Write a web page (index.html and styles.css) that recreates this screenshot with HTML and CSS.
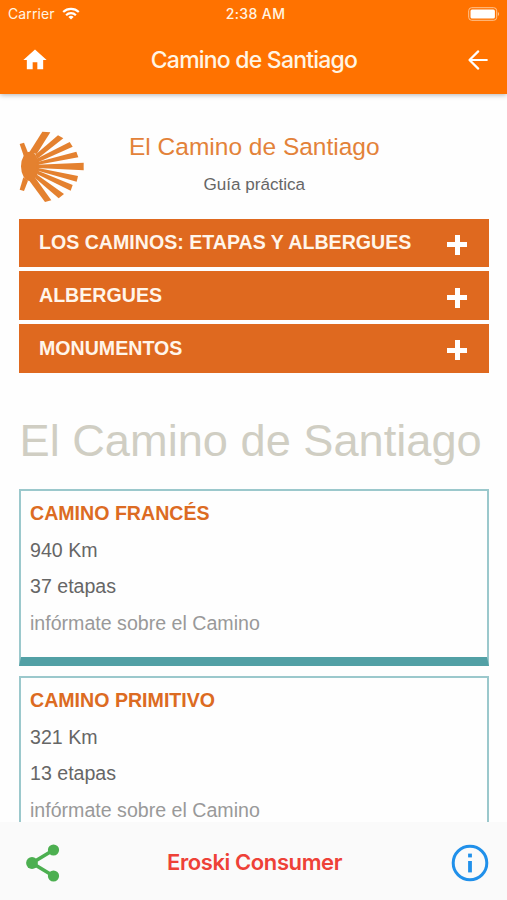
FILE: index.html
```
<!DOCTYPE html>
<html lang="es">

<head>
    <meta charset="UTF-8">
    <meta name="viewport" content="width=device-width, initial-scale=1.0">
    <title>Camino de Santiago</title>
    <link rel="stylesheet" href="styles.css">
</head>

<body>
    <header>
        <div class="status-bar">
            <div class="carrier">
                <span>Carrier</span>
                <svg class="wifi" viewBox="0 0 18 13" width="18" height="13" fill="none" stroke="#fff" stroke-width="2.2">
                    <path d="M1.2 5A11.2 11.2 0 0 1 16.8 5" />
                    <path d="M4.1 8.2A7 7 0 0 1 13.9 8.2" />
                    <path d="M9 12.5L6.4 9.9A3.8 3.8 0 0 1 11.6 9.9Z" fill="#fff" stroke="none" />
                </svg>
            </div>
            <span class="clock">2:38 AM</span>
            <svg class="battery" viewBox="0 0 32 14" width="32" height="14">
                <rect x="0.7" y="0.7" width="28" height="12.6" rx="3" fill="none" stroke="#ffc591" stroke-width="1" />
                <rect x="2.5" y="2.4" width="24.4" height="9.2" rx="1.5" fill="#fff" />
                <path d="M29.9 5v4a2.3 2.3 0 0 0 0-4z" fill="#ffc591" />
            </svg>
        </div>
        <div class="nav-bar">
            <svg class="home" viewBox="0 0 24 24" width="28" height="28" fill="#fff">
                <path d="M10 20v-6h4v6h5v-8h3L12 3 2 12h3v8z" />
            </svg>
            <h1>Camino de Santiago</h1>
            <svg class="back" viewBox="0 0 20 20" width="20" height="20" fill="none" stroke="#fff" stroke-width="2.2" stroke-linecap="round" stroke-linejoin="round">
                <path d="M10.2 1.4L1.5 10l8.7 8.6M1.8 10H18.8" />
            </svg>
        </div>
    </header>

    <main>
        <div class="intro">
            <svg class="shell" viewBox="27 30 198 216" width="66" height="72" fill="#e4812f">
                <ellipse cx="60" cy="139" rx="27" ry="44" />
                <path d="M29 72L42 68 54 98 42 110Z" />
                <path d="M29 209L42 213 54 182 40 172Z" />
                <path d="M58 97L97 35 121 37 80 102Z" />
                <path d="M76 104L144 46 160 55 82 116Z" />
                <path d="M80 116L179 66 188 80 84 127Z" />
                <path d="M80 127L199 95 205 112 84 134Z" />
                <path d="M80 134L221 128 221 151 80 144Z" />
                <path d="M80 143L204 168 200 185 84 152Z" />
                <path d="M80 151L188 195 182 212 82 163Z" />
                <path d="M78 162L162 222 146 235 76 175Z" />
                <path d="M76 174L124 241 105 246 58 182Z" />
            </svg>
            <div class="intro-text">
                <h2>El Camino de Santiago</h2>
                <p>Guía práctica</p>
            </div>
        </div>

        <ul class="menu">
            <li><span>LOS CAMINOS: ETAPAS Y ALBERGUES</span><i class="plus"></i></li>
            <li><span>ALBERGUES</span><i class="plus"></i></li>
            <li><span>MONUMENTOS</span><i class="plus"></i></li>
        </ul>

        <h2 class="section-title">El Camino de Santiago</h2>

        <div class="card">
            <h3>CAMINO FRANCÉS</h3>
            <p>940 Km</p>
            <p>37 etapas</p>
            <p class="more">infórmate sobre el Camino</p>
        </div>
        <div class="card">
            <h3>CAMINO PRIMITIVO</h3>
            <p>321 Km</p>
            <p>13 etapas</p>
            <p class="more">infórmate sobre el Camino</p>
        </div>
    </main>

    <footer>
        <svg class="share" viewBox="0 0 34 38" width="34" height="38" fill="#4caf50">
            <path d="M27.5 6L6 19l21.5 13" fill="none" stroke="#4caf50" stroke-width="3.6" />
            <circle cx="27.5" cy="6" r="5.6" />
            <circle cx="6" cy="19" r="5.9" />
            <circle cx="27.5" cy="32" r="5.6" />
        </svg>
        <strong>Eroski Consumer</strong>
        <svg class="info" viewBox="0 0 38 38" width="38" height="38" fill="#2090ea">
            <circle cx="19" cy="19" r="16.8" fill="none" stroke="#2090ea" stroke-width="3" />
            <rect x="17.1" y="9.6" width="3.8" height="3.8" />
            <rect x="17.1" y="17" width="3.8" height="11.4" />
        </svg>
    </footer>
</body>

</html>
```
FILE: styles.css
```
* {
    box-sizing: border-box;
}

body {
    margin: 0;
    height: 900px;
    display: flex;
    flex-direction: column;
    overflow: hidden;
    background-color: #fefefe;
    color: #666;
    font-family: "Liberation Sans", Arial, sans-serif;
}

h1,
h2,
h3,
p,
ul {
    margin: 0;
    padding: 0;
    font-weight: normal;
}

svg {
    display: block;
    overflow: visible;
}

/* Header */
header {
    flex: none;
    height: 94px;
    background-color: #ff7200;
    color: #fff5e4;
    box-shadow: 0 1px 5px rgba(0, 0, 0, 0.3);
    font-family: Inter, "Liberation Sans", sans-serif;
}

.status-bar {
    height: 27px;
    padding: 0 7px 0 8px;
    display: grid;
    grid-template-columns: 1fr auto 1fr;
    align-items: center;
    font-size: 14px;
}

.carrier {
    display: flex;
    align-items: center;
    gap: 7px;
    letter-spacing: 0.1px;
}

.clock {
    padding-left: 3px;
    font-weight: 500;
    font-size: 14px;
    letter-spacing: 0.4px;
}

.battery {
    justify-self: end;
}

.nav-bar {
    height: 66px;
    padding: 0 19px 0 21px;
    display: flex;
    align-items: center;
    justify-content: space-between;
}

.nav-bar h1 {
    padding-right: 9px;
    font-size: 23px;
    font-weight: 500;
    letter-spacing: -0.78px;
}

/* Content */
main {
    flex: 1;
    min-height: 0;
    overflow: hidden;
    padding: 36px 18px 0 19px;
}

.intro {
    height: 88px;
    display: flex;
}

.intro-text {
    margin-left: 44px;
    text-align: center;
    white-space: nowrap;
}

.intro h2 {
    font-size: 24.5px;
    line-height: 34px;
    color: #e38239;
}

.intro p {
    font-size: 17.1px;
    line-height: 42px;
}

.menu {
    padding-top: 0.5px;
    list-style: none;
    display: flex;
    flex-direction: column;
    gap: 4px;
}

.menu li {
    height: 48.7px;
    padding: 0 22px 0 20px;
    display: flex;
    align-items: center;
    justify-content: space-between;
    background-color: #df691f;
    color: #fff5ea;
    font-size: 19.6px;
    font-weight: bold;
    white-space: nowrap;
}

.plus {
    width: 20px;
    height: 20px;
    margin-top: 4px;
    background:
        linear-gradient(#fff, #fff) center / 20px 5px no-repeat,
        linear-gradient(#fff, #fff) center / 5px 20px no-repeat;
}

.section-title {
    margin: 42.5px 0 22px 0.5px;
    font-size: 45.2px;
    line-height: 52px;
    color: #d0cec3;
    white-space: nowrap;
}

.card {
    height: 177px;
    margin-bottom: 10px;
    padding: 4px 9px 0;
    border: 2px solid #9bc8cc;
    border-bottom: 9px solid #52a0a5;
    font-size: 19.6px;
    line-height: 36.7px;
}

.card h3 {
    font-size: 19.6px;
    font-weight: bold;
    color: #dc6b22;
}

.card .more {
    color: #999;
}

/* Bottom bar */
footer {
    flex: none;
    height: 78px;
    padding: 4px 18px 0 26px;
    display: flex;
    align-items: center;
    justify-content: space-between;
    background-color: #fafafa;
}

footer strong {
    padding: 0 2px 3px 0;
    font-family: Inter, "Liberation Sans", sans-serif;
    font-size: 22px;
    font-weight: 600;
    letter-spacing: -0.4px;
    color: #ee4137;
}
```
